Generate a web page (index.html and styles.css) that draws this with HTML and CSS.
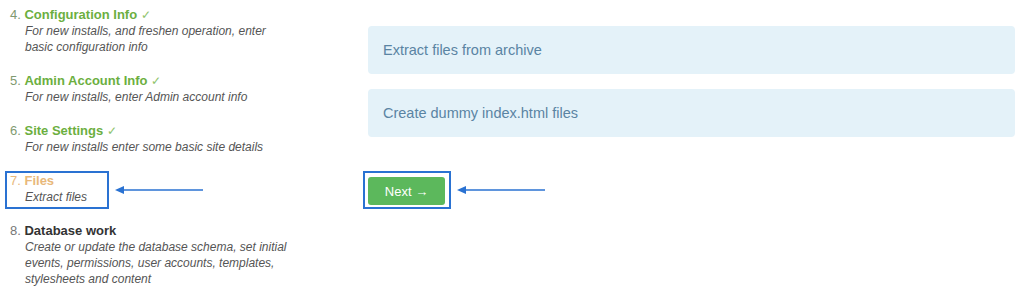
FILE: index.html
```html
<!DOCTYPE html>
<html lang="en">
<head>
    <meta charset="UTF-8">
    <meta name="viewport" content="width=device-width, initial-scale=1.0">
    <title>Installer - Files</title>
    <link rel="stylesheet" href="styles.css">
</head>
<body>

    <div class="page">
        <!-- Step list -->
        <ol class="steps">
            <li class="step done">
                <div class="step-title"><span class="num">4.</span> <b>Configuration Info</b> <span class="tick">&#10003;</span></div>
                <div class="step-desc">For new installs, and freshen operation, enter<br>basic configuration info</div>
            </li>
            <li class="step done">
                <div class="step-title"><span class="num">5.</span> <b>Admin Account Info</b> <span class="tick">&#10003;</span></div>
                <div class="step-desc">For new installs, enter Admin account info</div>
            </li>
            <li class="step done">
                <div class="step-title"><span class="num">6.</span> <b>Site Settings</b> <span class="tick">&#10003;</span></div>
                <div class="step-desc">For new installs enter some basic site details</div>
            </li>
            <li class="step-row">
                <div class="step current highlight">
                    <div class="step-title"><span class="num">7.</span> <b>Files</b></div>
                    <div class="step-desc">Extract files</div>
                </div>
                <svg class="arrow" width="90" height="10" viewBox="0 0 90 10">
                    <line x1="6" y1="5" x2="88" y2="5" stroke="#2a72d2" stroke-width="1.6"/>
                    <polygon points="0,5 9,1 9,9" fill="#2a72d2"/>
                </svg>
            </li>
            <li class="step">
                <div class="step-title"><span class="num">8.</span> <b>Database work</b></div>
                <div class="step-desc">Create or update the database schema, set initial<br>events, permissions, user accounts, templates,<br>stylesheets and content</div>
            </li>
        </ol>

        <!-- Current step tasks -->
        <div class="tasks">
            <div class="task">Extract files from archive</div>
            <div class="task">Create dummy index.html files</div>

            <div class="actions">
                <div class="highlight btn-wrap">
                    <button class="next-btn">Next &rarr;</button>
                </div>
                <svg class="arrow" width="90" height="10" viewBox="0 0 90 10">
                    <line x1="6" y1="5" x2="88" y2="5" stroke="#2a72d2" stroke-width="1.6"/>
                    <polygon points="0,5 9,1 9,9" fill="#2a72d2"/>
                </svg>
            </div>
        </div>
    </div>

</body>
</html>
```

FILE: styles.css
```css
body {
    font-family: "Liberation Sans", Arial, sans-serif;
    background-color: #ffffff;
    margin: 0;
    color: #555;
}

.page {
    display: grid;
    grid-template-columns: 358px 647px;
    padding: 7px 0 0 10px;
}

/* step list */

.steps {
    list-style: none;
    margin: 0;
    padding: 0;
}

.step,
.step-row {
    margin-bottom: 18px;
}

.step-title {
    font-size: 13px;
    line-height: 16px;
    color: #333;
}

.step-title b {
    font-weight: bold;
}

.num {
    color: #777;
}

.step-desc {
    font-size: 12px;
    line-height: 16px;
    font-style: italic;
    color: #555;
    padding-left: 15px;
}

.done .step-title b {
    color: #6caf3f;
}

.done .num {
    color: #7f9a70;
}

.tick {
    color: #8fc46c;
    font-size: 12px;
}

.current .step-title,
.current .num {
    color: #e8b87a;
}

.step-row {
    display: flex;
    align-items: center;
    gap: 6px;
    margin-top: -2px;
    margin-left: -5px;
    margin-bottom: 14px;
}

.highlight {
    border: 2px solid #2a72d2;
}

.step.highlight {
    width: 97px;
    padding: 0 0 2px 3px;
    margin: 0;
}

.arrow {
    display: block;
}

/* tasks */

.tasks {
    padding-top: 19px;
}

.task {
    background: #e4f2f9;
    color: #5a84a3;
    font-size: 14.5px;
    height: 48px;
    line-height: 48px;
    padding: 0 15px;
    border-radius: 4px;
    margin-bottom: 15px;
}

.actions {
    display: flex;
    align-items: center;
    gap: 6px;
    margin-top: 34px;
    margin-left: -5px;
}

.btn-wrap {
    padding: 4px 4px 2px 3px;
}

.next-btn {
    display: block;
    width: 77px;
    height: 28px;
    border: none;
    border-radius: 3px;
    background: #5cb85c;
    color: white;
    font-family: "Liberation Sans", Arial, sans-serif;
    font-size: 13px;
    padding: 0;
    cursor: pointer;
}

.next-btn:hover {
    background: #4cae4c;
}
```
